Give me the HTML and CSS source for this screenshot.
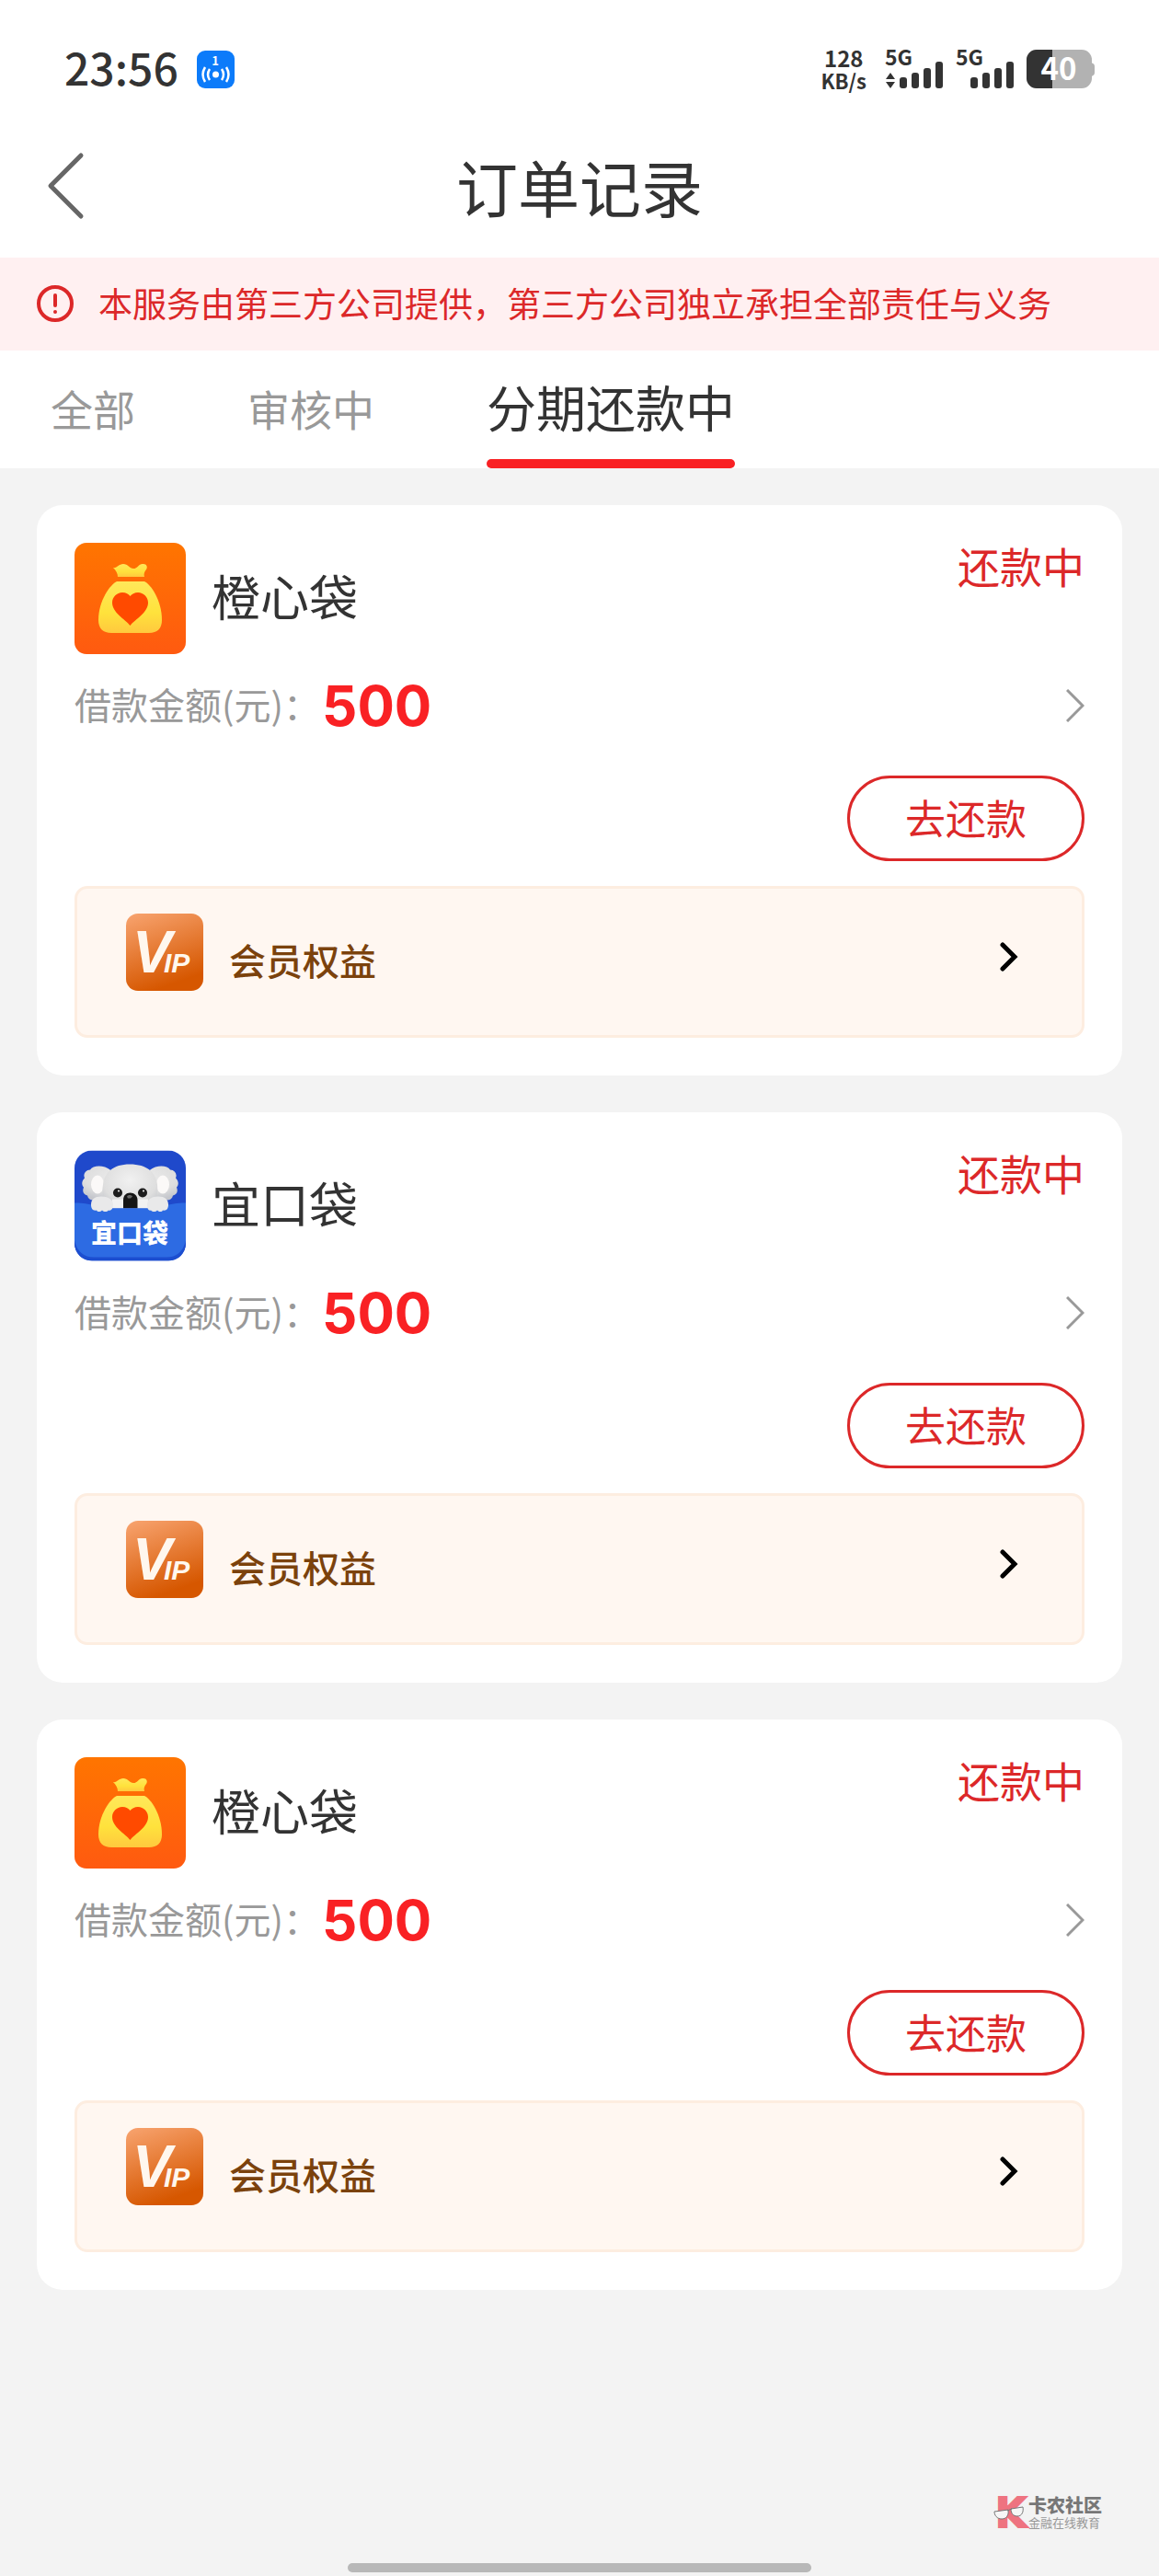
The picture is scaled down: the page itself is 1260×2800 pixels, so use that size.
FILE: index.html
```html
<!DOCTYPE html>
<html lang="zh-CN">
<head>
  <meta charset="UTF-8" />
  <meta name="viewport" content="width=device-width, initial-scale=1.0" />
  <title>订单记录</title>
  <link rel="stylesheet" href="styles.css">
</head>
<body>
  <!-- Shared gradients and icons -->
  <svg class="sprite" xmlns="http://www.w3.org/2000/svg" aria-hidden="true">
    <defs>
      <linearGradient id="bagBg" x1="0" y1="0" x2="0" y2="1">
        <stop offset="0" stop-color="#ff7500" />
        <stop offset="1" stop-color="#ff5a10" />
      </linearGradient>
      <linearGradient id="bagBody" x1="0" y1="0" x2="0" y2="1">
        <stop offset="0" stop-color="#ffe85a" />
        <stop offset="0.6" stop-color="#ffe23c" />
        <stop offset="1" stop-color="#ffc93e" />
      </linearGradient>
      <linearGradient id="vipBg" x1="0" y1="0" x2="0.35" y2="1">
        <stop offset="0" stop-color="#f8a470" />
        <stop offset="1" stop-color="#d65700" />
      </linearGradient>
      <radialGradient id="fur" cx="0.5" cy="0.35" r="0.7">
        <stop offset="0" stop-color="#f1f1f1" />
        <stop offset="0.7" stop-color="#dedede" />
        <stop offset="1" stop-color="#c4c6cc" />
      </radialGradient>
      <clipPath id="koalaClip"><rect width="121" height="120" rx="19" /></clipPath>
    </defs>

    <symbol id="icon-bag" viewBox="0 0 121 121">
      <rect width="121" height="121" rx="13" fill="url(#bagBg)" />
      <path fill="url(#bagBody)" d="M42 27c4 1 6-4 11-4 5 0 7 5 11 5 5 0 6-6 11-5 3 0 5 3 3 6-2 2-3 5-2 8H47c0-4-2-7-5-10z" />
      <path fill="url(#bagBody)" d="M46 42h30c7 3 19 21 19 42 0 9-5 14-14 14H40c-9 0-14-5-14-14 0-21 13-39 20-42z" />
      <path fill="#ff4a00" d="M60.500 90C55 83 41 76 41 65c0-6 5-11 11-11 4 0 7 2 8.500 4 1.500-2 5-4 8.500-4 6 0 11 5 11 11 0 11-14 18-19.500 25z" />
    </symbol>

    <symbol id="icon-arrow" viewBox="0 0 20 36">
      <path d="M1 1l17 17L1 35" fill="none" stroke="#999" stroke-width="3" />
    </symbol>

    <symbol id="icon-arrow-bold" viewBox="0 0 20 74">
      <path d="M3 24l13 13L3 50" fill="none" stroke="#000" stroke-width="5" stroke-linecap="round" />
    </symbol>
  </svg>

  <div class="top">
    <!-- Status bar -->
    <div class="status-bar">
      <span class="time">23:56</span>
      <svg class="hotspot" viewBox="0 0 41 41">
        <rect width="41" height="41" rx="9" fill="#0c7bfa" />
        <text x="20" y="16" text-anchor="middle" font-size="13" font-weight="700" fill="#fff">1</text>
        <circle cx="20.500" cy="26" r="3.500" fill="#fff" />
        <path d="M14 20q-4 6 0 12M27 20q4 6 0 12M9 18q-5 8 0 16M32 18q5 8 0 16" fill="none" stroke="#fff" stroke-width="2.500" />
      </svg>
      <div class="net-speed">
        <span class="speed-num">128</span>
        <span class="speed-unit">KB/s</span>
      </div>
      <svg class="signal" viewBox="0 0 64 44">
        <text x="0" y="18" font-size="23" font-weight="700">5G</text>
        <path d="M6 26l5 7H1zM6 43l5-7H1z" />
        <rect x="16" y="31" width="8" height="12" rx="3" />
        <rect x="29" y="26" width="8" height="17" rx="3" />
        <rect x="42" y="21" width="8" height="22" rx="3" />
        <rect x="55" y="14" width="8" height="29" rx="3" />
      </svg>
      <svg class="signal" viewBox="0 0 64 44">
        <text x="0" y="18" font-size="23" font-weight="700">5G</text>
        <rect x="16" y="31" width="8" height="12" rx="3" />
        <rect x="29" y="26" width="8" height="17" rx="3" />
        <rect x="42" y="21" width="8" height="22" rx="3" />
        <rect x="55" y="14" width="8" height="29" rx="3" />
      </svg>
      <svg class="battery" viewBox="0 0 74 42">
        <rect width="71" height="42" rx="11" fill="#b2b2b2" />
        <path d="M70 14q4 1 4 4v7q0 3-4 4z" fill="#b2b2b2" />
        <path d="M28 0H11A11 11 0 0 0 0 11v20a11 11 0 0 0 11 11h17z" fill="#333" />
        <text x="35" y="33" text-anchor="middle" font-size="33" font-weight="700" fill="#fff">40</text>
      </svg>
    </div>

    <header class="header">
      <a href="#" class="back" aria-label="返回">
        <svg viewBox="0 0 40 72">
          <path d="M37 3L4 36l33 33" fill="none" stroke="#666" stroke-width="5" stroke-linecap="round" stroke-linejoin="round" />
        </svg>
      </a>
      <h1>订单记录</h1>
    </header>
  </div>

  <div class="notice">
    <svg viewBox="0 0 40 40">
      <circle cx="20" cy="20" r="18" fill="none" stroke="#dc2829" stroke-width="4" />
      <path d="M20 11v11" stroke="#dc2829" stroke-width="4" stroke-linecap="round" />
      <circle cx="20" cy="29" r="2" fill="#dc2829" />
    </svg>
    <span>本服务由第三方公司提供，第三方公司独立承担全部责任与义务</span>
  </div>

  <nav class="tabs">
    <button class="tab">全部</button>
    <button class="tab">审核中</button>
    <button class="tab active">分期还款中</button>
  </nav>

  <!-- Order list -->
  <main class="orders">
    <section class="card">
      <div class="card-head">
        <svg class="logo"><use href="#icon-bag" /></svg>
        <h2>橙心袋</h2>
        <span class="state">还款中</span>
      </div>
      <a href="#" class="amount">
        <span class="label">借款金额(元)：</span>
        <strong>500</strong>
        <svg class="arrow"><use href="#icon-arrow" /></svg>
      </a>
      <button class="repay">去还款</button>
      <a href="#" class="vip">
        <svg class="vip-icon" viewBox="0 0 84 84">
          <rect width="84" height="84" rx="13" fill="url(#vipBg)" />
          <text x="7" y="64" font-size="64">V</text>
          <text x="41" y="64" font-size="30">IP</text>
        </svg>
        <span>会员权益</span>
        <svg class="vip-arrow"><use href="#icon-arrow-bold" /></svg>
      </a>
    </section>

    <section class="card">
      <div class="card-head">
        <svg class="logo" viewBox="0 0 121 120">
          <g clip-path="url(#koalaClip)">
            <rect width="121" height="120" fill="#1f49cb" />
            <path fill="url(#fur)" d="M40 22c-8-7-20-6-23-1-5 0-8 5-6 9-4 4-3 8-1 10-2 5 0 8 4 9 1 5 6 6 10 4l14-2zM81 22c8-7 20-6 23-1 5 0 8 5 6 9 4 4 3 8 1 10 2 5 0 8-4 9-1 5-6 6-10 4l-14-2z" />
            <ellipse cx="25" cy="37" rx="7" ry="10" fill="#fbf9f8" />
            <ellipse cx="96" cy="37" rx="7" ry="10" fill="#fbf9f8" />
            <path fill="url(#fur)" d="M60 15c17 0 28 7 30 22 1 12-2 20-6 27H37c-5-7-8-15-6-27 2-15 13-22 29-22z" />
            <path fill="#f2f2f2" d="M41 53h39v12H41z" />
            <circle cx="47" cy="46" r="5" fill="#1c1c1c" />
            <circle cx="74" cy="46" r="5" fill="#1c1c1c" />
            <circle cx="48" cy="44" r="1" fill="#fff" />
            <circle cx="75" cy="44" r="1" fill="#fff" />
            <path fill="#151515" d="M53 63V54c0-5 3-8 7.500-8s8 3 8 8v9z" />
            <path fill="#666" d="M57 50c1-2 5-2 6 0l-2 2h-3z" />
            <path fill="#1c4ed0" d="M0 57c20 0 28 6 45 6h31c17 0 25-6 45-6v63H0z" />
            <path fill="#2d6be3" d="M0 57c20 0 28 6 45 6h31c17 0 25-6 45-6v41c-3 12-10 18-21 18H21C10 116 3 110 0 98z" />
            <path fill="#e9e9ea" d="M18 59c0-6 4-9 11-9s13 3 13 9c0 5-3 7-5 6-2 2-5 2-7 0-2 2-5 2-6 0-4 1-6-2-6-6zM79 59c0-6 5-9 12-9s11 3 11 9c0 4-2 7-6 6-1 2-4 2-6 0-2 2-5 2-7 0-2 1-4-1-4-6z" />
            <text x="60" y="100" text-anchor="middle" font-size="28" font-weight="900" fill="#fff">宜口袋</text>
          </g>
        </svg>
        <h2>宜口袋</h2>
        <span class="state">还款中</span>
      </div>
      <a href="#" class="amount">
        <span class="label">借款金额(元)：</span>
        <strong>500</strong>
        <svg class="arrow"><use href="#icon-arrow" /></svg>
      </a>
      <button class="repay">去还款</button>
      <a href="#" class="vip">
        <svg class="vip-icon" viewBox="0 0 84 84">
          <rect width="84" height="84" rx="13" fill="url(#vipBg)" />
          <text x="7" y="64" font-size="64">V</text>
          <text x="41" y="64" font-size="30">IP</text>
        </svg>
        <span>会员权益</span>
        <svg class="vip-arrow"><use href="#icon-arrow-bold" /></svg>
      </a>
    </section>

    <section class="card">
      <div class="card-head">
        <svg class="logo"><use href="#icon-bag" /></svg>
        <h2>橙心袋</h2>
        <span class="state">还款中</span>
      </div>
      <a href="#" class="amount">
        <span class="label">借款金额(元)：</span>
        <strong>500</strong>
        <svg class="arrow"><use href="#icon-arrow" /></svg>
      </a>
      <button class="repay">去还款</button>
      <a href="#" class="vip">
        <svg class="vip-icon" viewBox="0 0 84 84">
          <rect width="84" height="84" rx="13" fill="url(#vipBg)" />
          <text x="7" y="64" font-size="64">V</text>
          <text x="41" y="64" font-size="30">IP</text>
        </svg>
        <span>会员权益</span>
        <svg class="vip-arrow"><use href="#icon-arrow-bold" /></svg>
      </a>
    </section>
  </main>

  <footer class="footer">
    <div class="brand">
      <svg viewBox="0 0 34 36">
        <text class="brand-k" x="2" y="34" font-size="44">K</text>
        <path d="M1 17l15-2c1 6-2 10-7 10s-8-4-8-8zM19 14l13-2c1 5-1 10-6 10s-7-4-7-8z" fill="#f6f6f6" stroke="#777" />
        <path d="M15 16l5-2" stroke="#777" />
      </svg>
      <div class="brand-text">
        <b>卡农社区</b>
        <small>金融在线教育</small>
      </div>
    </div>
    <div class="home-bar"></div>
  </footer>
</body>
</html>
```
FILE: styles.css
```css
* {
  box-sizing: border-box;
}

body {
  margin: 0;
  min-height: 100vh;
  display: flex;
  flex-direction: column;
  font-family: "Noto Sans CJK SC", "Noto Sans", sans-serif;
  background: #f3f3f3;
  color: #333;
}

a {
  color: inherit;
  text-decoration: none;
}

button {
  font-family: inherit;
  cursor: pointer;
}

h1, h2 {
  margin: 0;
}

svg {
  display: block;
  flex: none;
  overflow: visible;
}

.sprite {
  position: absolute;
  width: 0;
  height: 0;
}

.top {
  background: #fff;
}

/* Status bar */
.status-bar {
  display: flex;
  align-items: center;
  height: 130px;
  padding: 20px 70px 0;
}

.time {
  padding-bottom: 6px;
  font-size: 48px;
  line-height: 48px;
  font-weight: 500;
}

.hotspot {
  width: 41px;
  height: 41px;
  margin-left: 20px;
}

.net-speed {
  display: flex;
  flex-direction: column;
  align-items: center;
  margin-left: auto;
  font-weight: 700;
  line-height: 25px;
}

.speed-num {
  font-size: 24px;
}

.speed-unit {
  font-size: 22px;
}

.signal {
  width: 64px;
  height: 44px;
  margin-left: 13px;
  fill: #333;
}

.net-speed + .signal {
  margin-left: 20px;
}

.battery {
  width: 74px;
  height: 42px;
  margin-left: 13px;
}

/* Title */
.header {
  display: grid;
  grid-template-columns: 1fr auto 1fr;
  align-items: center;
  height: 150px;
  padding: 0 51px 6px;
}

.back {
  width: 40px;
}

.header h1 {
  font-size: 67px;
  line-height: 80px;
  font-weight: 400;
}

.notice {
  display: flex;
  align-items: center;
  gap: 27px;
  padding: 21px 40px 23px;
  background: #fff0f1;
  color: #dc2829;
  font-size: 37px;
  line-height: 57px;
}

.notice svg {
  width: 40px;
  height: 40px;
}

/* Tabs */
.tabs {
  display: flex;
  gap: 122px;
  height: 128px;
  padding: 0 55px;
  background: #fff;
}

.tab {
  padding: 0 0 4px;
  border: 0;
  border-radius: 0;
  background: none;
  color: #999;
  font-size: 46px;
}

.tab.active {
  display: flex;
  flex-direction: column;
  justify-content: space-between;
  padding: 0;
  color: #333;
  font-size: 54px;
  line-height: 122px;
}

.tab.active::after {
  content: '';
  width: 100%;
  height: 10px;
  margin-top: -10px;
  border-radius: 5px;
  background: #f92124;
}

/* Order cards */
.orders {
  display: flex;
  flex-direction: column;
  gap: 40px;
  padding: 40px;
}

.card {
  display: flex;
  flex-direction: column;
  padding: 41px;
  background: #fff;
  border-radius: 28px;
}

.card-head {
  display: flex;
  align-items: center;
  gap: 28px;
}

.logo {
  width: 121px;
  height: 121px;
}

.card-head h2 {
  padding-bottom: 8px;
  font-size: 53px;
  line-height: 64px;
  font-weight: 400;
}

.state {
  align-self: flex-start;
  margin-left: auto;
  color: #dc2829;
  font-size: 46px;
  line-height: 48px;
}

.amount {
  display: flex;
  align-items: center;
  height: 80px;
  margin-top: 16px;
}

.amount .label {
  padding: 0 2px 4px 0;
  color: #999;
  font-size: 40px;
}

.amount strong {
  color: #f92124;
  font-family: Inter, sans-serif;
  font-size: 60px;
}

.arrow {
  width: 20px;
  height: 36px;
  margin-left: auto;
}

.repay {
  align-self: flex-end;
  height: 93px;
  margin-top: 36px;
  padding: 0 60px 4px;
  border: 3px solid #dc2829;
  border-radius: 47px;
  background: #fff;
  color: #dc2829;
  font-size: 44px;
}

.vip {
  display: flex;
  align-items: flex-end;
  margin-top: 27px;
  padding: 27px 69px 48px 53px;
  border: 3px solid #fdede0;
  border-radius: 14px;
  background: #fff7f1;
  color: #7b420c;
  font-size: 40px;
  line-height: 68px;
  font-weight: 500;
}

.vip-icon {
  width: 84px;
  height: 84px;
  margin-right: 28px;
}

.vip-icon text {
  fill: #fff7ee;
  font-family: "Liberation Sans", sans-serif;
  font-weight: 700;
  font-style: italic;
}

.vip-arrow {
  width: 20px;
  height: 74px;
  margin-left: auto;
}

/* Footer */
.footer {
  display: flex;
  flex-direction: column;
  gap: 36px;
  margin-top: auto;
  padding-bottom: 4px;
}

.brand {
  display: flex;
  align-items: center;
  align-self: flex-end;
  gap: 4px;
  padding-right: 62px;
  color: #777;
}

.brand svg {
  width: 34px;
  height: 36px;
}

.brand-k {
  font-family: "DejaVu Sans", sans-serif;
  font-weight: 700;
  fill: #ee7380;
  stroke: #ee7380;
  stroke-width: 2;
}

.brand-text {
  display: flex;
  flex-direction: column;
}

.brand-text b {
  font-size: 20px;
  line-height: 22px;
  font-weight: 900;
}

.brand-text small {
  color: #999;
  font-size: 13px;
  line-height: 16px;
}

.home-bar {
  align-self: center;
  width: 40%;
  height: 10px;
  border-radius: 5px;
  background: #b8b8b8;
}
```
